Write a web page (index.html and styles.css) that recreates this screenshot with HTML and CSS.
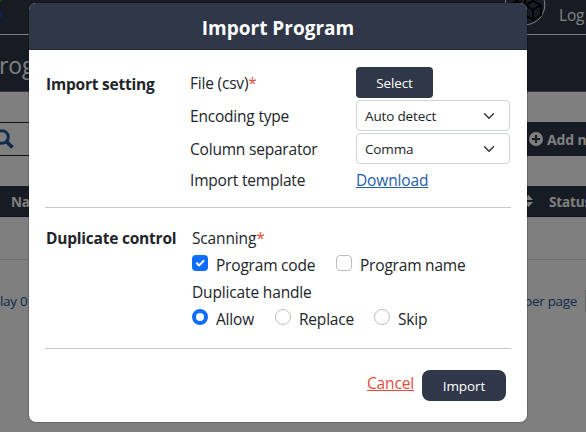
FILE: index.html
```
<!DOCTYPE html>
<html lang="en">
<head>
<meta charset="utf-8">
<title>Import Program</title>
<link rel="stylesheet" href="styles.css">
</head>
<body>
<div class="page">
  <header class="topbar">
    <i class="logo"></i>
    <svg class="avatar" width="42" height="42" viewBox="0 0 42 42" fill="none" stroke="#000" stroke-width="1.8">
      <circle cx="21" cy="21" r="19.8" fill="#2f3748" stroke="#fff" stroke-width="1"/>
      <path d="M13 17l-8 4v10l8 5 8-5V21zM5 21l8 5 8-5M13 26v10M29 17l-8 4v10l8 5 8-5V21zM21 21l8 5 8-5M29 26v10M21 3l-8 4v10l8 5 8-5V7zM13 7l8 5 8-5M21 12v10"/>
    </svg>
    <span class="login">Log</span>
  </header>
  <div class="titlebar">rog</div>
  <div class="toolbar">
    <div class="search">
      <svg width="20" height="20" viewBox="0 0 20 20" fill="none" stroke="#245697" stroke-width="3"><circle cx="8" cy="8" r="6.3"/><path d="M12.5 12.5l6 6" stroke-width="3.8"/></svg>
    </div>
    <div class="add">
      <svg width="14" height="14" viewBox="0 0 14 14"><circle cx="7" cy="7" r="7" fill="#fff"/><path d="M7 3v8M3 7h8" stroke="#2f3748" stroke-width="2.2"/></svg>
      <span>Add new</span>
    </div>
  </div>
  <div class="thead">
    <span class="name">Na</span>
    <svg class="sort" width="9" height="12" viewBox="0 0 9 12" fill="#fff"><path d="M0 5l4.5-5L9 5zM0 7h9l-4.5 5z"/></svg>
    <span class="status">Status</span>
  </div>
  <div class="empty"></div>
  <div class="pager"><span>lay 0</span><span class="per">per page</span><i class="pagesize"></i></div>
</div>
<div class="backdrop">
  <div class="modal">
    <div class="modal-head">Import Program</div>
    <div class="modal-body">
      <section class="group settings">
        <h2>Import setting</h2>
        <div class="fields">
          <label>File (csv)<b>*</b></label><div><button class="btn select">Select</button></div>
          <label>Encoding type</label>
          <div class="dropdown">Auto detect<svg width="12" height="12" viewBox="0 0 16 16" fill="none" stroke="#343a40" stroke-width="2" stroke-linecap="round" stroke-linejoin="round"><path d="M2 5l6 6 6-6"/></svg></div>
          <label>Column separator</label>
          <div class="dropdown">Comma<svg width="12" height="12" viewBox="0 0 16 16" fill="none" stroke="#343a40" stroke-width="2" stroke-linecap="round" stroke-linejoin="round"><path d="M2 5l6 6 6-6"/></svg></div>
          <label>Import template</label><div><a class="download">Download</a></div>
        </div>
      </section>
      <section class="group duplicates">
        <h2>Duplicate control</h2>
        <div class="options">
          <div class="caption">Scanning<b>*</b></div>
          <div class="checks">
            <span class="check code"><svg width="16" height="16" viewBox="0 0 16 16"><rect width="16" height="16" rx="4" fill="#0d6efd"/><path d="M4.8 8.2l2.3 2.3 4.4-4.6" fill="none" stroke="#fff" stroke-width="2" stroke-linecap="round" stroke-linejoin="round"/></svg>Program code</span>
            <span class="check"><i class="box"></i>Program name</span>
          </div>
          <div class="caption handle">Duplicate handle</div>
          <div class="checks">
            <span class="check allow"><i class="radio on"></i>Allow</span>
            <span class="check replace"><i class="radio"></i>Replace</span>
            <span class="check"><i class="radio"></i>Skip</span>
          </div>
        </div>
      </section>
      <footer class="actions"><a class="cancel">Cancel</a><button class="btn import">Import</button></footer>
    </div>
  </div>
</div>
</body>
</html>
```
FILE: styles.css
```
* { box-sizing: border-box; }
body {
  margin: 0;
  width: 586px;
  height: 432px;
  overflow: hidden;
  font: 15.5px/24px "Open Sans", "Noto Sans", sans-serif;
  color: #212529;
  letter-spacing: -0.15px;
}
.page { height: 432px; background: #fff; overflow: hidden; white-space: nowrap; }
.topbar {
  height: 35px;
  background: #2f3748;
  border-bottom: 1px solid #fff;
  display: flex;
  color: #fff;
}
.logo { width: 2px; height: 17px; background: linear-gradient(#2a7d3a 2px, transparent 2px 12px, #174eaa 12px); }
.avatar { flex: none; margin: -16px 0 0 502px; }
.login { margin: 3px 0 0 13px; }
.titlebar {
  height: 57px;
  padding-top: 15px;
  background: #2f3748;
  border-bottom: 1px solid #777;
  color: #fff;
  font-size: 23px;
  line-height: 30px;
  text-indent: -1px;
}
.toolbar { height: 94px; display: flex; justify-content: space-between; padding-top: 30px; }
.search {
  width: 300px;
  height: 34px;
  border: solid #222;
  border-width: 1px 0;
  padding: 6px 0 0;
}
.search svg { display: block; margin-left: -6px; }
.add {
  width: 57px;
  height: 34px;
  margin-left: auto;
  display: flex;
  align-items: center;
  gap: 4px;
  background: #2f3748;
  box-shadow: -5px 0 #2f3748;
  color: #fff;
  font-weight: 700;
  font-size: 14px;
  overflow: hidden;
}
.add svg { flex: none; }
.add span { padding-top: 2px; }
.thead {
  height: 31px;
  background: #2f3748;
  border-bottom: 1px solid #202040;
  color: #fff;
  display: flex;
  align-items: center;
  font-size: 13.5px;
  font-weight: 700;
}
.thead > * { flex: none; }
.thead span { padding-top: 2px; }
.thead .name { width: 511px; padding-left: 11px; }
.sort { margin-left: 13px; }
.status { margin-left: 16px; }
.empty { height: 43px; border-bottom: 1px solid #e0e0e0; }
.pager { height: 81px; display: flex; align-items: center; color: #245697; font-size: 13.5px; letter-spacing: -.3px; }
.pager span:first-child { width: 28px; }
.per { margin-left: 496px; }
.pagesize { margin-left: auto; width: 1px; height: 22px; background: #ccc; }
.backdrop {
  position: absolute;
  inset: 0;
  padding: 2px 0 0 28px;
  background: rgba(0, 0, 0, .5);
}
.modal {
  width: 500px;
  height: 421px;
  border: 1px solid rgba(0, 0, 0, .175);
  border-radius: 8px;
  background: #fff;
  background-clip: padding-box;
  overflow: hidden;
}
.modal-head {
  height: 47px;
  padding-top: 1px;
  background: #2f3748;
  border-bottom: 1px solid #242b38;
  color: #fff;
  text-align: center;
  font-size: 19px;
  font-weight: 700;
  line-height: 48px;
  letter-spacing: 0;
}
.modal-body { padding: 0 16px; }
.group { display: flex; border-bottom: 1px solid #c8c8c8; }
.settings { height: 158px; padding-top: 17px; }
.duplicates { height: 141px; padding-top: 18px; }
h2 { margin: 0; padding-left: 1px; font-size: 15.5px; line-height: 24px; font-weight: 700; letter-spacing: -.22px; white-space: nowrap; }
.settings h2 { width: 145px; padding-top: 5px; }
.duplicates h2 { width: 147px; }
b { color: #e74c3c; font-weight: 400; }
.fields {
  display: grid;
  grid-template-columns: 166px 154px;
  grid-template-rows: 31px 31px 31px 26px;
  row-gap: 2px;
  align-items: center;
}
.fields label { padding-top: 1px; letter-spacing: -.2px; }
.btn {
  display: block;
  height: 31px;
  padding: 1px 0 0;
  border: 0;
  border-radius: 4px;
  background: #2f3748;
  color: #fff;
  font: 13.5px/30px "Open Sans", "Noto Sans", sans-serif;
  letter-spacing: -.1px;
}
.select { width: 77px; }
.dropdown {
  height: 31px;
  border: 1px solid #ced4da;
  border-radius: 4px;
  padding: 0 14px 0 8px;
  display: flex;
  align-items: center;
  justify-content: space-between;
  font-size: 13.5px;
}
.download { display: inline-block; padding-top: 1px; color: #245ea5; text-decoration: underline; }
.checks { display: flex; height: 24px; margin-top: 2px; }
.check { display: flex; gap: 8px; white-space: nowrap; padding-top: 1px; letter-spacing: -.2px; }
.check svg, .box, .radio { flex: none; width: 16px; height: 16px; margin-top: 2px; }
.box, .radio { border: 1px solid #bfbfbf; border-radius: 4px; }
.radio { border-radius: 50%; }
.radio.on { border: 4.5px solid #0d6efd; }
.code { width: 144px; }
.allow { width: 83px; }
.replace { width: 99px; }
.handle { margin-top: 4px; }
.actions { display: flex; justify-content: flex-end; padding: 21px 5px 0 0; }
.cancel { color: #e74c3c; text-decoration: underline; margin: 1px 8px 0 0; }
.import { width: 84px; border-radius: 8px; }
```
